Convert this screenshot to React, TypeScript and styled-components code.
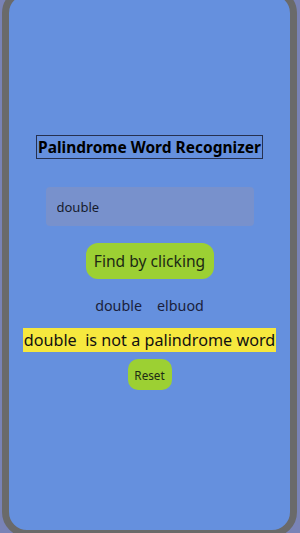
import React, { useState } from "react";
import styled, { createGlobalStyle } from "styled-components";

const GlobalStyle = createGlobalStyle`
	html, body {
		margin: 0;
		padding: 0;
		background: #7983b6;
		overflow: hidden;
	}
	body {
		font-family: "Noto Sans", "Open Sans", sans-serif;
	}
`;

function App() {
	const [word, setWord] = useState("double");
	const [checked, setChecked] = useState(true);

	const reversed = word.split("").reverse().join("");
	const isPalindrome = word.length > 0 && word === reversed;

	return (
		<>
			<GlobalStyle />
			<Frame>
				<Screen>
					<Title>Palindrome Word Recognizer</Title>
					<WordInput
						value={word}
						onChange={(e) => setWord(e.target.value)}
					/>
					<FindButton onClick={() => setChecked(true)}>
						Find by clicking
					</FindButton>
					{checked && (
						<>
							<Words>
								<span>{word}</span>
								<span>{reversed}</span>
							</Words>
							<Result>
								<mark>
									{word}&nbsp; is {isPalindrome ? "" : "not "}a
									palindrome word
								</mark>
							</Result>
						</>
					)}
					<ResetButton
						onClick={() => {
							setWord("");
							setChecked(false);
						}}
					>
						Reset
					</ResetButton>
				</Screen>
			</Frame>
		</>
	);
}

const Frame = styled.div`
	box-sizing: border-box;
	width: 295px;
	height: 549px;
	margin: -12px 0 0 2px;
	border: 7px solid #6a6a6a;
	border-radius: 25px;
	background-color: #6590de;
	overflow: hidden;
`;

const Screen = styled.div`
	display: flex;
	flex-direction: column;
	align-items: center;
	padding-top: 140px;
	color: #111;
`;

const Title = styled.h1`
	margin: 0;
	padding: 0 1px;
	border: 1px solid #263150;
	font-size: 15.5px;
	line-height: 22px;
	font-weight: 700;
	color: #000;
	white-space: nowrap;
`;

const WordInput = styled.input`
	box-sizing: border-box;
	margin-top: 28px;
	width: 208px;
	height: 39px;
	padding: 0 11px;
	border: none;
	outline: none;
	border-radius: 4px;
	background-color: #7891cc;
	font-family: "Noto Sans", "Open Sans", sans-serif;
	font-size: 13px;
	color: #161b2c;
`;

const FindButton = styled.button`
	margin-top: 17px;
	width: 128px;
	height: 36px;
	padding: 0;
	border: none;
	border-radius: 12px;
	background-color: #9cd033;
	font-family: "Noto Sans", "Open Sans", sans-serif;
	font-size: 15.6px;
	color: #1d2a14;
	cursor: pointer;
`;

const Words = styled.div`
	display: flex;
	gap: 15px;
	margin-top: 17px;
	font-size: 14.3px;
	line-height: 20px;
	color: #1a1f3c;
`;

const Result = styled.p`
	margin: 13px 0 0;
	font-size: 16.2px;
	line-height: 22px;
	white-space: nowrap;

	mark {
		background-color: #f6e83e;
		color: #111;
		padding: 1px 1px;
	}
`;

const ResetButton = styled.button`
	margin-top: 8px;
	width: 44px;
	height: 31px;
	padding: 0;
	border: none;
	border-radius: 10px;
	background-color: #9cd033;
	font-family: "Noto Sans", "Open Sans", sans-serif;
	font-size: 11.7px;
	color: #1d2a14;
	cursor: pointer;
`;

export default App;
